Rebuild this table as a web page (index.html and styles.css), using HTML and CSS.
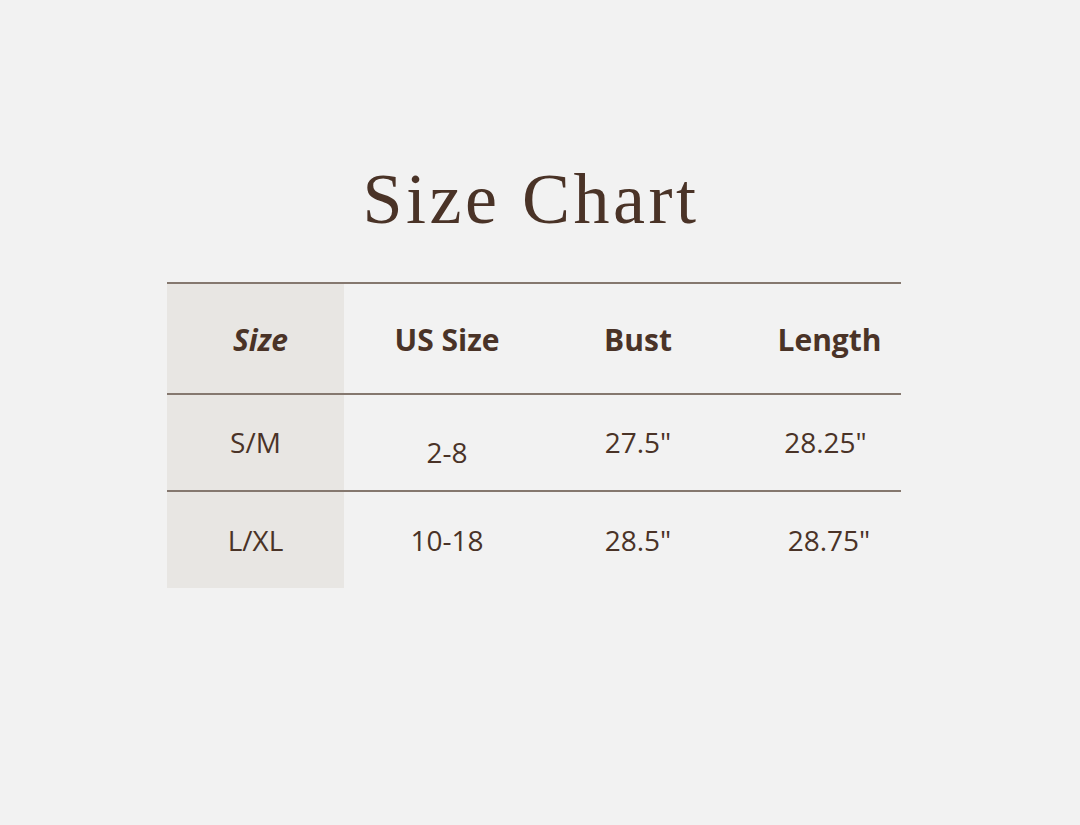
FILE: index.html
```html
<!DOCTYPE html>
<html>
<head>
<meta charset="utf-8">
<link rel="stylesheet" href="styles.css">
</head>
<body>
<main class="page">
  <h1 class="title">Size Chart</h1>
  <div class="chart">
    <div class="row head">
      <div class="cell c1 em">Size</div>
      <div class="cell c2">US Size</div>
      <div class="cell c3">Bust</div>
      <div class="cell c4">Length</div>
    </div>
    <div class="row r1">
      <div class="cell c1">S/M</div>
      <div class="cell c2 low">2-8</div>
      <div class="cell c3">27.5"</div>
      <div class="cell c4">28.25"</div>
    </div>
    <div class="row r2">
      <div class="cell c1">L/XL</div>
      <div class="cell c2">10-18</div>
      <div class="cell c3">28.5"</div>
      <div class="cell c4">28.75"</div>
    </div>
  </div>
</main>
</body>
</html>
```
FILE: styles.css
```css
html, body {
  margin: 0;
  padding: 0;
  background: #f2f2f2;
}
.page {
  width: 1080px;
  height: 825px;
  display: flex;
  flex-direction: column;
  align-items: center;
  color: #4a3327;
}
.title {
  margin: 154px 0 0 0;
  height: 128px;
  font-family: "Liberation Serif", serif;
  font-weight: 400;
  font-size: 72px;
  line-height: 90px;
  letter-spacing: 3.5px;
  padding-right: 18px;
}
.chart {
  width: 734px;
  align-self: flex-start;
  margin-left: 167px;
  border-top: 2px solid #85786f;
  font-family: "Open Sans", sans-serif;
}
.row {
  display: grid;
  grid-template-columns: 177px 206px 176px 175px;
}
.head { height: 109px; border-bottom: 2px solid #85786f; }
.r1 { height: 95px; border-bottom: 2px solid #85786f; }
.r2 { height: 96px; }
.cell {
  display: flex;
  align-items: center;
  justify-content: center;
  font-size: 28px;
}
.head .cell {
  font-weight: 700;
  font-size: 30px;
  padding-top: 2px;
}
.c1 { background: #e8e6e3; }
.head .c4 { padding-left: 32px; }
.r1 .c4 { padding-left: 24px; }
.r2 .c4 { padding-left: 31px; }
.em { font-style: italic; padding-left: 10px; }
.low { padding-top: 18px; }
.r1 .cell { padding-bottom: 2px; }
.r1 .low { padding-bottom: 0; }
```
